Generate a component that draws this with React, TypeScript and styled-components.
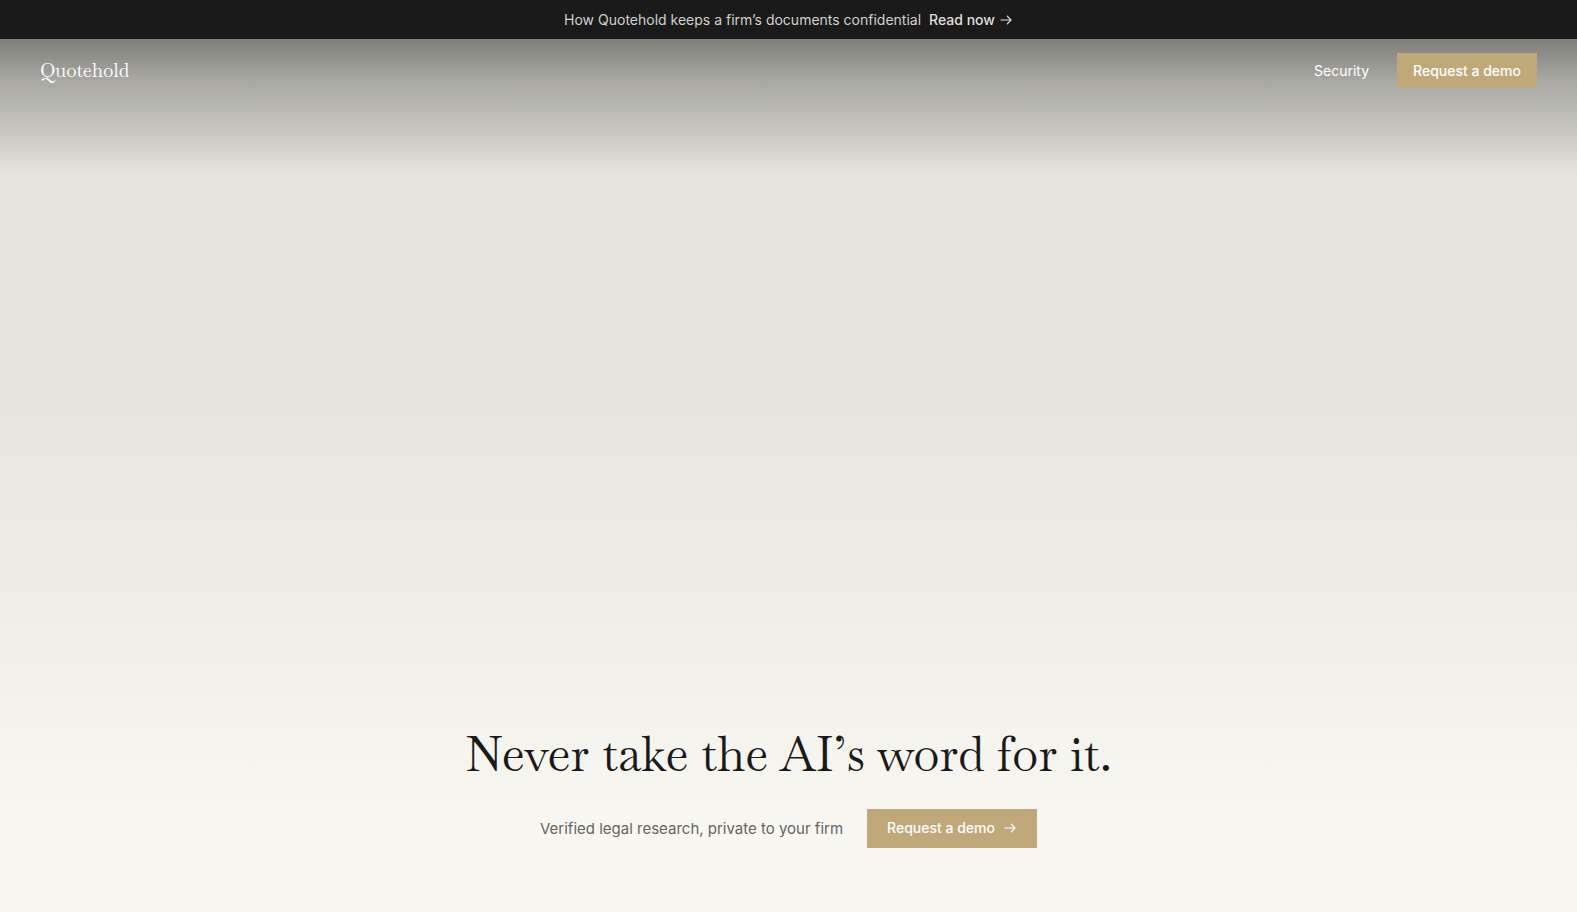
import React from "react";
import styled, { createGlobalStyle } from "styled-components";

const sans = `Inter, "Liberation Sans", sans-serif`;
const serif = `Baskervville, "Libre Baskerville", "Liberation Serif", serif`;

const Global = createGlobalStyle`
  * { box-sizing: border-box; }
  body { margin: 0; background: #f8f7f2; font-family: ${sans}; color: #1a1a1a; }
`;
const Page = styled.div`
  display: flex;
  flex-direction: column;
  min-height: 100vh;
`;
const Banner = styled.aside`
  display: flex;
  align-items: center;
  justify-content: center;
  gap: 8px;
  padding: 10px 24px 9px;
  background: #1a1a1a;
  color: #d2d1cc;
  font-size: 14px;
  line-height: 20px;
`;
const BannerLink = styled.a`
  display: inline-flex;
  align-items: center;
  gap: 4px;
  color: #e0dfda;
  font-weight: 500;
  text-decoration: none;
`;
const Hero = styled.div`
  flex: 1;
  display: flex;
  flex-direction: column;
  justify-content: space-between;
  background:
    linear-gradient(to bottom, rgba(26, 26, 22, 0.5), rgba(26, 26, 22, 0.3) 30%, rgba(26, 26, 22, 0.15) 67%, rgba(26, 26, 22, 0)) top / 100% 136px no-repeat,
    linear-gradient(to bottom, #e5e4df 0%, #e5e4df 40%, #f8f7f2 90%);
`;
const Header = styled.header`
  display: flex;
  align-items: center;
  justify-content: space-between;
  padding: 14px 40px;
`;
const Logo = styled.a`
  font-family: ${serif};
  color: #fff;
  font-size: 19px;
  line-height: 28px;
  text-decoration: none;
`;
const Nav = styled.nav`
  display: flex;
  align-items: center;
  gap: 28px;
`;
const NavLink = styled.a`
  color: #fff;
  font-size: 14px;
  line-height: 20px;
  text-decoration: none;
`;
const DemoButton = styled.button<{ $large?: boolean }>`
  display: inline-flex;
  align-items: center;
  gap: 8px;
  border: 0;
  padding: ${p => (p.$large ? "9px 20px 10px" : "8px 16px 7px")};
  background: #bfa97a;
  color: #fff;
  font: 500 14px/20px ${sans};
  cursor: pointer;
`;
const Intro = styled.main`
  display: flex;
  flex-direction: column;
  align-items: center;
  gap: 24px;
  padding: 0 24px 64px;
`;
const Title = styled.h1`
  margin: 0;
  font-family: ${serif};
  font-weight: 400;
  font-size: 48px;
  line-height: 62px;
  text-align: center;
`;
const Actions = styled.div`
  display: flex;
  align-items: center;
  justify-content: center;
  flex-wrap: wrap;
  gap: 24px;
`;
const Tagline = styled.p`
  margin: 0;
  font-size: 15px;
  line-height: 24px;
  color: #66645f;
`;

const Arrow = () => (
  <svg width="14" height="14" viewBox="0 0 14 14" fill="none" stroke="currentColor" strokeWidth="1.2" strokeLinecap="round" strokeLinejoin="round" aria-hidden="true">
    <path d="M2 7h10M8.3 3.2 12 7l-3.7 3.8" />
  </svg>
);

export default function App() {
  return (
    <Page>
      <Global />
      <Banner>
        <span>How Quotehold keeps a firm’s documents confidential</span>
        <BannerLink href="#security">Read now <Arrow /></BannerLink>
      </Banner>
      <Hero>
        <Header>
          <Logo href="#">Quotehold</Logo>
          <Nav>
            <NavLink href="#security">Security</NavLink>
            <DemoButton type="button">Request a demo</DemoButton>
          </Nav>
        </Header>
        <Intro>
          <Title>Never take the AI’s word for it.</Title>
          <Actions>
            <Tagline>Verified legal research, private to your firm</Tagline>
            <DemoButton type="button" $large>Request a demo <Arrow /></DemoButton>
          </Actions>
        </Intro>
      </Hero>
    </Page>
  );
}
